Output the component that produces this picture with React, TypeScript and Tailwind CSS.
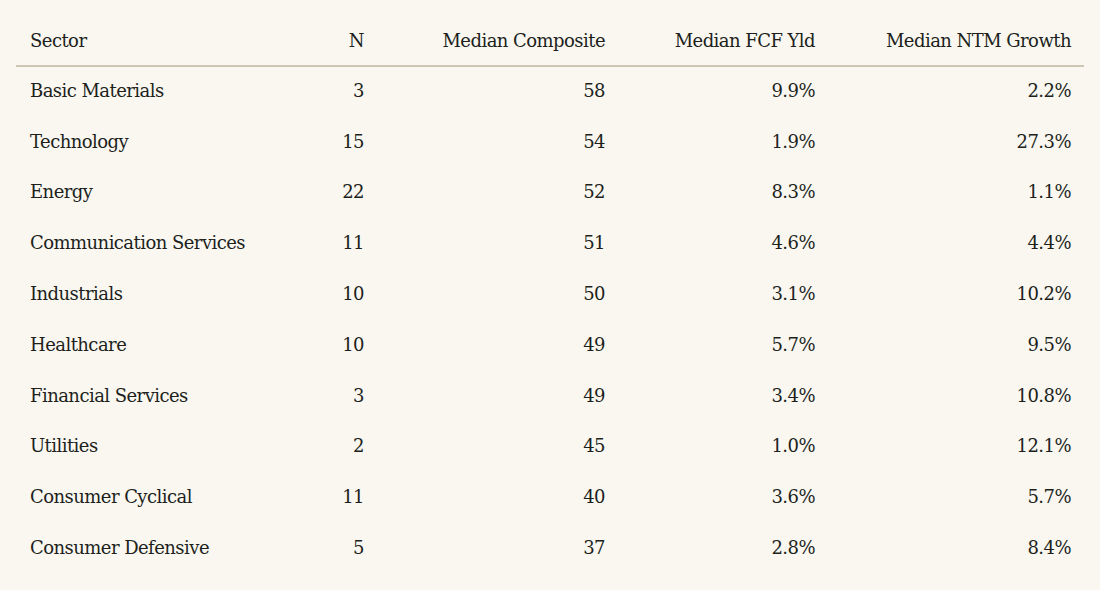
const rows: [string, number, number, string, string][] = [
  ["Basic Materials", 3, 58, "9.9%", "2.2%"],
  ["Technology", 15, 54, "1.9%", "27.3%"],
  ["Energy", 22, 52, "8.3%", "1.1%"],
  ["Communication Services", 11, 51, "4.6%", "4.4%"],
  ["Industrials", 10, 50, "3.1%", "10.2%"],
  ["Healthcare", 10, 49, "5.7%", "9.5%"],
  ["Financial Services", 3, 49, "3.4%", "10.8%"],
  ["Utilities", 2, 45, "1.0%", "12.1%"],
  ["Consumer Cyclical", 11, 40, "3.6%", "5.7%"],
  ["Consumer Defensive", 5, 37, "2.8%", "8.4%"],
]

const cols = "grid grid-cols-[234px_127px_241px_210px_256px]"

export default function App() {
  return (
    <div className="min-h-[590px] w-[1100px] bg-[#faf7f0] px-4 pt-[16px] font-['DejaVu_Serif',serif] text-[18px] tracking-[-0.55px] text-[#201f1c]">
      <div className={`${cols} h-[51px] items-center border-b-2 border-[#cbc7b4]`}>
        <div className="pl-[14px]">Sector</div>
        <div className="pr-[13px] text-right">N</div>
        <div className="pr-[13px] text-right">Median Composite</div>
        <div className="pr-[13px] text-right">Median FCF Yld</div>
        <div className="pr-[13px] text-right">Median NTM Growth</div>
      </div>
      {rows.map(([sector, n, comp, fcf, growth]) => (
        <div key={sector} className={`${cols} h-[50.8px] items-center pb-[4px]`}>
          <div className="pl-[14px]">{sector}</div>
          <div className="pr-[13px] text-right">{n}</div>
          <div className="pr-[13px] text-right">{comp}</div>
          <div className="pr-[13px] text-right">{fcf}</div>
          <div className="pr-[13px] text-right">{growth}</div>
        </div>
      ))}
    </div>
  )
}
